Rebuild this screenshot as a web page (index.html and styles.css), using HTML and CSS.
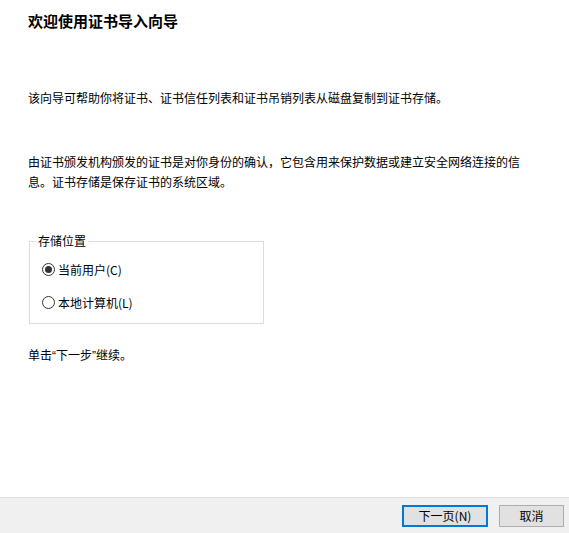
FILE: index.html
```html
<!DOCTYPE html>
<html lang="zh-CN">
<head>
<meta charset="utf-8">
<link rel="stylesheet" href="styles.css">
</head>
<body>
<div class="wizard">
  <main class="content">
    <h1 class="title">欢迎使用证书导入向导</h1>
    <p class="para p1">该向导可帮助你将证书、证书信任列表和证书吊销列表从磁盘复制到证书存储。</p>
    <p class="para p2">由证书颁发机构颁发的证书是对你身份的确认，它包含用来保护数据或建立安全网络连接的信息。证书存储是保存证书的系统区域。</p>
    <fieldset class="group">
      <legend class="legend">存储位置</legend>
      <label class="radio-row">
        <span class="radio checked"></span><span class="radio-label">当前用户(C)</span>
      </label>
      <label class="radio-row">
        <span class="radio"></span><span class="radio-label">本地计算机(L)</span>
      </label>
    </fieldset>
    <p class="para p3">单击<span class="q">“</span>下一步<span class="q">”</span>继续。</p>
  </main>
  <footer class="footer">
    <button class="btn primary">下一页(N)</button>
    <button class="btn">取消</button>
  </footer>
</div>
</body>
</html>
```
FILE: styles.css
```css
html, body {
  margin: 0;
  padding: 0;
  background: #ffffff;
}
body {
  font-family: "Noto Sans CJK SC", "Microsoft YaHei", sans-serif;
  font-size: 12px;
  color: #000000;
}
.wizard {
  width: 569px;
  height: 533px;
  display: flex;
  flex-direction: column;
}
.content {
  flex: 1;
  padding: 0 0 0 28px;
}
.title {
  margin: 0;
  padding-top: 11px;
  font-size: 15px;
  line-height: 20px;
  font-weight: bold;
}
.para {
  margin: 0;
  line-height: 20px;
  width: 505px;
}
.p1 { margin-top: 57px; }
.p2 { margin-top: 44px; }
.p3 { margin-top: 21px; }
.q {
  font-family: "Liberation Sans", sans-serif;
}
.group {
  margin: 49px 0 0 1px;
  width: 235px;
  height: 83px;
  box-sizing: border-box;
  border: 1px solid #dcdcdc;
  padding: 17px 0 0 12px;
  position: relative;
  min-inline-size: 0;
}
.legend {
  position: absolute;
  top: -10px;
  left: 6px;
  padding: 0 2px;
  background: #fff;
  line-height: 18px;
}
.radio-row {
  display: flex;
  align-items: center;
  gap: 3px;
  height: 20px;
  margin-bottom: 13px;
}
.radio {
  width: 13px;
  height: 13px;
  box-sizing: border-box;
  border: 1px solid #333333;
  border-radius: 50%;
  background: #fff;
  position: relative;
}
.radio.checked::after {
  content: "";
  position: absolute;
  left: 2px;
  top: 2px;
  width: 7px;
  height: 7px;
  border-radius: 50%;
  background: #333333;
}
.footer {
  height: 35px;
  background: #f0f0f0;
  border-top: 1px solid #dfdfdf;
  display: flex;
  align-items: center;
  justify-content: flex-end;
  gap: 11px;
  padding-right: 5px;
}
.btn {
  font-family: inherit;
  font-size: 12px;
  height: 22px;
  width: 65px;
  box-sizing: border-box;
  border: 1px solid #adadad;
  background: #e1e1e1;
  color: #000;
  padding: 0;
  line-height: 18px;
}
.btn.primary {
  width: 86px;
  border: 2px solid #0078d7;
}
```
